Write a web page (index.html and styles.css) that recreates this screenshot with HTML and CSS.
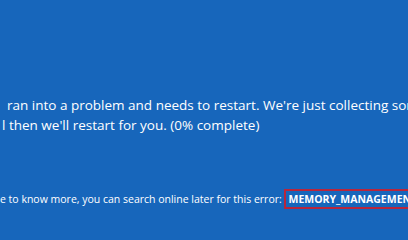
FILE: index.html
```html
<!DOCTYPE html>
<html>
<head>
<meta charset="utf-8">
<link rel="stylesheet" href="styles.css">
</head>
<body>
<div class="screen">
  <div class="message">
    <p class="line line-first">ran into a problem and needs to restart. We're just collecting some error info, and</p>
    <p class="line line-second">l then we'll restart for you. (0% complete)</p>
  </div>
  <p class="info">e to know more, you can search online later for this error: <span class="code">MEMORY_MANAGEMENT</span></p>
</div>
</body>
</html>
```
FILE: styles.css
```css
html, body {
  margin: 0;
  padding: 0;
  background: #1766bb;
}
.screen {
  width: 408px;
  height: 229px;
  overflow: hidden;
  background: #1766bb;
  color: #ffffff;
  font-family: "Open Sans", "Noto Sans", sans-serif;
  display: flex;
  flex-direction: column;
  padding-top: 95px;
  box-sizing: border-box;
}
.message {
  display: flex;
  flex-direction: column;
}
.line {
  margin: 0;
  font-size: 13.5px;
  line-height: 20px;
  white-space: nowrap;
}
.line-first {
  padding-left: 7px;
}
.line-second {
  padding-left: 2px;
}
.info {
  margin: 55px 0 0 0;
  padding-left: 0;
  font-size: 10.5px;
  line-height: 18px;
  white-space: nowrap;
}
.code {
  font-weight: 700;
  border: 2px solid #b8263c;
  padding: 1px 2px;
}
```
